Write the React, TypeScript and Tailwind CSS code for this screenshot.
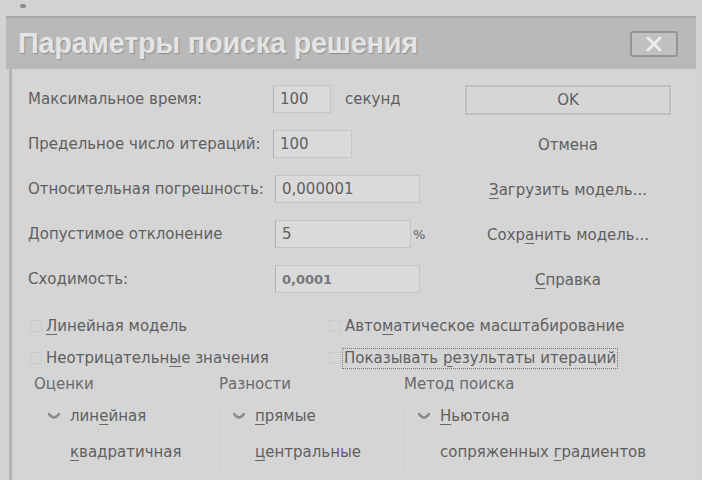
import React from "react";

const Acc = ({ children }: { children: React.ReactNode }) => (
  <span className="underline decoration-[#6a6a6a] underline-offset-[3px]">{children}</span>
);

const Field = ({ value, w, dim }: { value: string; w: string; dim?: boolean }) => (
  <div
    className={`${w} h-[28px] flex items-center px-[6px] bg-[#dadada] border border-[#c4c4c4] border-l-[#b0b0b0] ${
      dim ? "text-[#777] font-bold text-[13px]" : ""
    }`}
  >
    {value}
  </div>
);

const RadioMark = ({ on }: { on?: boolean }) => (
  <span className="w-[12px] h-[12px] flex items-center justify-center">
    {on && (
      <svg width="12" height="10" viewBox="0 0 12 10">
        <path d="M1 3 Q6 10 11 3" stroke="#8a8a8a" strokeWidth="2.4" fill="none" strokeLinecap="round" />
      </svg>
    )}
  </span>
);

const SideButton = ({ children, framed }: { children: React.ReactNode; framed?: boolean }) => (
  <div
    className={`h-[30px] w-[206px] flex items-center justify-center ${
      framed ? "border-2 border-[#c0c0c0] bg-[#d6d6d6]" : "border border-[#d2d2d2]"
    }`}
  >
    {children}
  </div>
);

export default function App() {
  return (
    <div
      className="w-[702px] h-[480px] overflow-hidden bg-[#d3d3d3] text-[#5f5f5f] text-[15px] leading-none"
      style={{ fontFamily: '"DejaVu Sans", Verdana, sans-serif' }}
    >
      {/* strip above the window */}
      <div className="h-[16px] pl-[20px] pt-[4px]">
        <div className="w-[6px] h-[4px] bg-[#8c8c8c] rounded-full" />
      </div>

      {/* title bar */}
      <div className="h-[53px] mx-[6px] bg-[#b9b9b9] border-t-2 border-[#a9a9a9] flex items-center justify-between pl-[12px] pr-[18px]">
        <span
          className="text-[29px] font-bold tracking-[-0.3px] text-[#e4e4e4]"
          style={{ fontFamily: '"Liberation Sans", Arial, sans-serif', textShadow: "1px 1px 1px #8f8f8f" }}
        >
          Параметры поиска решения
        </span>
        <div className="w-[48px] h-[26px] border-2 border-[#959595] rounded-[3px] bg-[#c0c0c0] flex items-center justify-center">
          <svg width="18" height="16" viewBox="0 0 18 16">
            <path d="M3 2 L15 14 M15 2 L3 14" stroke="#ececec" strokeWidth="3" strokeLinecap="round" />
          </svg>
        </div>
      </div>

      {/* dialog body */}
      <div className="ml-[9px] mr-[4px] h-[420px] border-l-[3px] border-[#b2b2b2] bg-[#d5d5d5] pt-[16px]">
        <div className="flex">
          {/* fields */}
          <div className="w-[452px] pl-[16px] flex flex-col gap-[17px]">
            <div className="flex items-center h-[28px]">
              <span className="w-[245px]">Максимальное время:</span>
              <Field value="100" w="w-[58px]" />
              <span className="ml-[14px]">секунд</span>
            </div>
            <div className="flex items-center h-[28px]">
              <span className="w-[245px]">Предельное число итераций:</span>
              <Field value="100" w="w-[79px]" />
            </div>
            <div className="flex items-center h-[28px]">
              <span className="w-[247px]">Относительная погрешность:</span>
              <Field value="0,000001" w="w-[145px]" />
            </div>
            <div className="flex items-center h-[28px]">
              <span className="w-[247px]">Допустимое отклонение</span>
              <Field value="5" w="w-[136px]" />
              <span className="ml-[2px] text-[13px]">%</span>
            </div>
            <div className="flex items-center h-[28px]">
              <span className="w-[247px]">Сходимость:</span>
              <Field value="0,0001" w="w-[145px]" dim />
            </div>
          </div>

          {/* command buttons */}
          <div className="pl-[1px] flex flex-col gap-[15px]">
            <SideButton framed>OK</SideButton>
            <SideButton>Отмена</SideButton>
            <SideButton>
              <span>
                <Acc>З</Acc>агрузить модель...
              </span>
            </SideButton>
            <SideButton>
              <span>
                Сохр<Acc>а</Acc>нить модель...
              </span>
            </SideButton>
            <SideButton>
              <span>
                <Acc>С</Acc>правка
              </span>
            </SideButton>
          </div>
        </div>

        {/* check boxes */}
        <div className="mt-[22px] grid grid-cols-[299px_1fr] gap-y-[14px] pl-[18px]">
          <div className="flex items-center gap-[4px] h-[18px]">
            <span className="w-[12px] h-[12px] border border-[#cacaca]" />
            <span>
              <Acc>Л</Acc>инейная модель
            </span>
          </div>
          <div className="flex items-center gap-[4px] h-[18px]">
            <span className="w-[12px] h-[12px] border border-[#cacaca]" />
            <span>
              Авто<Acc>м</Acc>атическое масштабирование
            </span>
          </div>
          <div className="flex items-center gap-[4px] h-[18px]">
            <span className="w-[12px] h-[12px] border border-[#cacaca]" />
            <span>
              Неотрицательн<Acc>ы</Acc>е значения
            </span>
          </div>
          <div className="flex items-center gap-[1px] h-[18px]">
            <span className="w-[12px] h-[12px] border border-[#cacaca]" />
            <span className="border border-dotted border-[#7a7a7a] px-[1px] py-[2px]">
              Показывать <Acc>р</Acc>езультаты итераций
            </span>
          </div>
        </div>

        {/* option groups */}
        <div className="mt-[10px] grid grid-cols-[185px_185px_1fr] pl-[22px]">
          {[
            { title: "Оценки", a: <>лин<Acc>е</Acc>йная</>, b: <><Acc>к</Acc>вадратичная</> },
            { title: "Разности", a: <><Acc>п</Acc>рямые</>, b: <><Acc>ц</Acc>ентральные</> },
            { title: "Метод поиска", a: <><Acc>Н</Acc>ьютона</>, b: <>сопряженных <Acc>г</Acc>радиентов</> },
          ].map((g, i) => (
            <div key={i} className="flex flex-col">
              <span className="text-[#6a6a6a] h-[18px]">{g.title}</span>
              <div className="mt-[12px] border-l border-[#cfcfcf] pl-[13px] flex flex-col gap-[18px] pb-[10px]">
                <div className="flex items-center gap-[10px] h-[18px]">
                  <RadioMark on />
                  <span>{g.a}</span>
                </div>
                <div className="flex items-center gap-[10px] h-[18px]">
                  <RadioMark />
                  <span>{g.b}</span>
                </div>
              </div>
            </div>
          ))}
        </div>
      </div>
    </div>
  );
}
